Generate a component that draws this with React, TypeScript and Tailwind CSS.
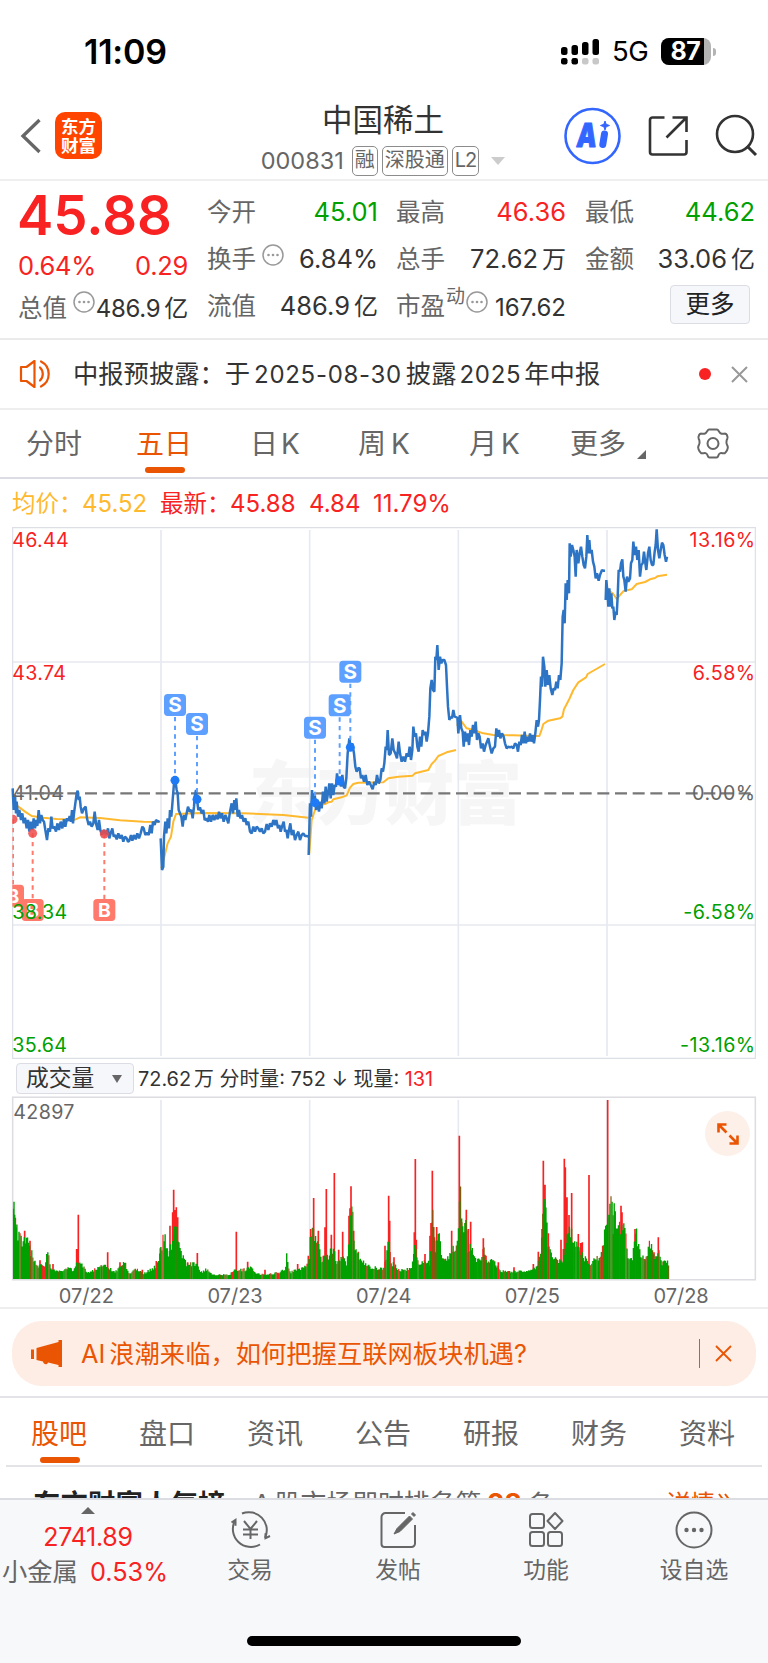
// src/pages/StockDetail.tsx

import clsx from "clsx";
import React from "react";

type Point = [number, number];

const FONT = "font-['Inter','Noto_Sans_CJK_SC',sans-serif]";

// 株価（1日ごとに [x, y] の折れ線）
const PRICE_DAYS: { offset: number; points: Point[] }[] = [
    {
        offset: 0,
        points: [
            [38, 805], [41, 870], [45, 825], [48, 880], [50, 845], [54, 890], [58, 870], [63, 900], [67, 880], [71, 910], [75, 893], [80, 925],
            [84, 900], [88, 935], [92, 905], [97, 930], [101, 895], [105, 925], [109, 900], [112, 918], [116, 870], [120, 910], [124, 885], [128, 900],
            [132, 905], [136, 930], [141, 960], [145, 925], [150, 935], [154, 890], [158, 925], [163, 920], [168, 935], [172, 910], [177, 930], [182, 905],
            [187, 925], [192, 898], [196, 920], [201, 895], [205, 903], [209, 888], [213, 905], [216, 870], [219, 910], [222, 880], [226, 850], [230, 820],
            [233, 812], [236, 840], [239, 830], [242, 860], [246, 880], [252, 865], [257, 860], [261, 895], [266, 915], [270, 905], [275, 920], [280, 910],
            [284, 875], [288, 910], [293, 930], [297, 900], [301, 930], [306, 945], [312, 930], [318, 945], [324, 925], [328, 955], [332, 940], [337, 925],
            [341, 950], [346, 945], [350, 958], [355, 940], [360, 955], [365, 945], [370, 965], [375, 950], [380, 955], [384, 965], [388, 962], [393, 945],
            [397, 962], [402, 945], [407, 958], [412, 940], [417, 955], [422, 940], [427, 920], [431, 925], [436, 945], [441, 938], [446, 945], [451, 915],
            [455, 940], [459, 905], [464, 915], [468, 900], [475, 905], [479, 903],
        ],
    },
    {
        offset: 0,
        points: [
            [482, 955], [486, 1050], [490, 1040], [492, 950], [496, 905], [499, 940], [503, 895], [507, 925], [510, 870], [514, 890], [518, 840], [522, 790],
            [526, 781], [530, 810], [533, 820], [536, 870], [540, 880], [544, 890], [548, 920], [552, 885], [556, 900], [560, 880], [564, 860], [569, 875],
            [574, 870], [578, 895], [582, 860], [584, 830], [588, 810], [591, 838], [595, 870], [600, 862], [605, 880], [610, 870], [614, 900], [619, 895],
            [624, 905], [628, 885], [633, 905], [638, 885], [643, 900], [648, 885], [653, 898], [657, 875], [661, 895], [666, 880], [671, 905], [676, 885],
            [680, 895], [685, 910], [690, 875], [695, 850], [699, 880], [703, 840], [706, 870], [709, 835], [713, 890], [717, 870], [721, 895], [726, 885],
            [731, 905], [736, 895], [740, 915], [745, 905], [750, 935], [755, 940], [760, 920], [765, 935], [770, 920], [775, 925], [780, 935], [785, 925],
            [790, 940], [795, 935], [800, 912], [805, 930], [810, 910], [815, 920], [820, 900], [825, 915], [829, 900], [834, 925], [838, 915], [842, 935],
            [846, 920], [851, 905], [855, 935], [859, 930], [863, 955], [867, 930], [871, 910], [875, 945], [880, 930], [885, 960], [890, 945], [895, 935],
            [900, 960], [905, 945], [910, 940], [915, 948], [920, 948], [925, 950],
        ],
    },
    {
        offset: 900,
        points: [
            [26, 1005], [30, 850], [33, 890], [36, 810], [40, 855], [44, 820], [48, 870], [52, 840], [57, 875], [61, 845], [65, 865], [69, 815],
            [73, 850], [77, 800], [80, 845], [84, 820], [88, 790], [92, 835], [96, 790], [100, 825], [104, 795], [108, 800], [111, 760], [115, 790],
            [119, 770], [123, 800], [127, 765], [131, 800], [135, 805], [139, 775], [143, 700], [148, 655], [152, 680], [157, 670], [162, 700], [166, 740],
            [170, 755], [174, 745], [179, 745], [183, 775], [187, 765], [192, 785], [197, 765], [202, 795], [207, 785], [212, 795], [218, 808], [223, 785],
            [227, 795], [231, 765], [236, 790], [241, 780], [245, 745], [249, 755], [253, 730], [257, 680], [260, 690], [263, 630], [267, 705], [272, 700],
            [277, 655], [281, 690], [286, 700], [291, 715], [296, 665], [300, 700], [305, 725], [310, 710], [315, 725], [320, 700], [325, 710], [329, 680],
            [333, 720], [337, 690], [340, 620], [344, 650], [348, 640], [352, 680], [356, 695], [360, 650], [364, 680], [368, 630], [372, 645], [376, 635],
            [380, 665], [384, 640], [388, 590], [391, 505], [395, 480], [399, 510], [403, 515], [406, 410], [409, 420], [412, 375], [416, 450], [420, 410],
            [424, 430], [428, 420], [433, 420], [438, 435], [441, 500], [444, 560], [448, 600], [452, 590], [456, 595], [460, 570], [464, 590], [470, 592],
        ],
    },
    {
        offset: 900,
        points: [
            [472, 590], [475, 640], [480, 585], [484, 625], [488, 635], [491, 680], [495, 635], [499, 665], [503, 640], [507, 675], [511, 630], [515, 650],
            [519, 615], [523, 640], [527, 605], [531, 660], [535, 640], [539, 650], [543, 685], [548, 670], [552, 695], [557, 675], [561, 665], [565, 655],
            [570, 680], [575, 700], [580, 685], [585, 680], [589, 625], [593, 650], [597, 630], [601, 655], [606, 640], [611, 650], [615, 670], [620, 685],
            [625, 680], [630, 682], [635, 680], [640, 685], [645, 670], [650, 675], [654, 695], [658, 665], [662, 675], [666, 645], [670, 670], [674, 635],
            [678, 670], [682, 650], [686, 665], [690, 640], [694, 665], [698, 645], [702, 670], [706, 640], [710, 600], [714, 620], [717, 600], [720, 540],
            [723, 470], [726, 500], [729, 410], [733, 440], [736, 500], [740, 450], [744, 495], [748, 465], [752, 505], [757, 525], [761, 505], [765, 510],
            [769, 485], [773, 505], [777, 465], [781, 480], [785, 430], [788, 290], [791, 270], [794, 310], [797, 190], [800, 240], [803, 180], [807, 220],
            [809, 70], [812, 110], [816, 75], [820, 90], [824, 110], [827, 170], [830, 90], [835, 130], [839, 100], [843, 80], [847, 110], [851, 135],
            [855, 145], [859, 110], [862, 45], [865, 100], [868, 60], [871, 100], [875, 90], [879, 125], [883, 140], [887, 175], [891, 160], [896, 182],
            [900, 165], [906, 150], [910, 152], [915, 152],
        ],
    },
    {
        offset: 1560,
        points: [
            [257, 240], [259, 180], [263, 225], [265, 260], [268, 205], [271, 260], [274, 220], [277, 265], [280, 260], [283, 300], [287, 275], [290, 285],
            [293, 230], [296, 150], [300, 155], [303, 130], [307, 118], [310, 170], [313, 180], [317, 215], [321, 170], [325, 185], [330, 175], [333, 130],
            [337, 120], [340, 65], [344, 105], [348, 80], [352, 120], [356, 90], [360, 170], [364, 135], [368, 130], [372, 95], [376, 130], [379, 150],
            [384, 100], [388, 80], [392, 120], [396, 135], [400, 135], [404, 95], [407, 75], [410, 28], [414, 90], [418, 115], [422, 90], [426, 68],
            [430, 75], [434, 105], [438, 125], [441, 110],
        ],
    },
];

// 平均価格
const AVG_DAYS: { offset: number; points: Point[] }[] = [
    { offset: 0, points: [[40, 850], [55, 860], [75, 875], [95, 888], [130, 893], [170, 897], [225, 899], [240, 892], [300, 894], [360, 901], [430, 905], [479, 906]] },
    { offset: 0, points: [[484, 1045], [492, 1015], [503, 970], [513, 950], [520, 905], [528, 882], [600, 879], [730, 880], [850, 885], [925, 893]] },
    { offset: 900, points: [[28, 1000], [35, 900], [45, 870], [57, 855], [75, 852], [85, 847], [95, 845], [100, 838], [125, 832], [140, 826], [150, 803], [160, 792], [175, 788], [250, 787], [265, 775], [295, 770], [338, 767], [345, 760], [385, 750], [395, 732], [405, 722], [415, 708], [440, 697], [468, 690]] },
    { offset: 900, points: [[472, 618], [476, 595], [485, 605], [500, 625], [520, 630], [550, 640], [580, 645], [640, 646], [700, 648], [718, 648], [723, 635], [730, 612], [745, 602], [780, 595], [787, 590], [792, 568], [808, 537], [820, 510], [835, 487], [858, 472], [863, 462], [915, 432]] },
    { offset: 1560, points: [[260, 205], [268, 212], [280, 222], [290, 237], [300, 225], [312, 212], [335, 208], [350, 192], [375, 186], [390, 178], [405, 174], [412, 169], [441, 164]] },
];

// 出来高の輪郭（緑）とスパイク（赤）
const VOLUME_ENVELOPE: Point[] = [
    [40, 240], [44, 200], [55, 150], [65, 135], [75, 130], [85, 145], [92, 95], [100, 78], [110, 48], [120, 44], [135, 50], [145, 100], [152, 42], [170, 24],
    [190, 27], [210, 40], [220, 27], [230, 65], [245, 52], [260, 22], [290, 34], [315, 50], [330, 36], [345, 22], [375, 64], [385, 17], [410, 34], [430, 17],
    [460, 37], [475, 52], [485, 115], [492, 148], [505, 92], [515, 115], [522, 158], [530, 182], [536, 135], [545, 80], [560, 52], [590, 50], [600, 22],
    [620, 34], [640, 14], [690, 16], [705, 32], [740, 32], [750, 44], [765, 20], [800, 14], [840, 24], [856, 32], [860, 84], [868, 22], [900, 34], [925, 50],
    [935, 185], [945, 140], [955, 135], [965, 68], [980, 70], [1000, 110], [1010, 60], [1030, 84], [1040, 38], [1050, 160], [1056, 280], [1062, 120],
    [1075, 80], [1090, 58], [1110, 42], [1150, 34], [1158, 74], [1166, 126], [1175, 55], [1200, 30], [1235, 34], [1246, 126], [1255, 54], [1275, 64],
    [1290, 52], [1298, 268], [1305, 110], [1318, 168], [1325, 66], [1345, 68], [1360, 110], [1372, 115], [1380, 328], [1387, 195], [1397, 192], [1405, 100],
    [1415, 115], [1430, 66], [1443, 64], [1450, 128], [1460, 58], [1480, 66], [1500, 27], [1540, 26], [1590, 26], [1610, 42], [1622, 84], [1630, 265],
    [1638, 245], [1645, 106], [1660, 66], [1690, 58], [1703, 180], [1720, 140], [1735, 110], [1750, 74], [1770, 54], [1790, 68], [1805, 84], [1815, 158],
    [1822, 240], [1835, 256], [1843, 252], [1850, 190], [1860, 170], [1873, 180], [1885, 66], [1898, 64], [1906, 174], [1918, 95], [1935, 64], [1950, 128],
    [1965, 76], [1975, 100], [1985, 52], [2000, 60], [2004, 74], [2008, 8],
];

const VOLUME_SPIKES: Point[] = [
    [46, 184], [74, 145], [90, 115], [120, 56], [159, 45], [230, 90], [235, 193], [323, 80], [360, 50], [427, 28], [469, 54], [481, 92], [510, 160], [518, 200], [521, 268],
    [525, 207], [529, 215], [533, 185], [563, 50], [592, 78], [709, 142], [743, 52], [795, 28], [893, 45], [925, 70], [932, 150], [941, 243], [955, 145], [970, 70],
    [975, 155], [979, 270], [994, 133], [1003, 318], [1016, 88], [1028, 142], [1047, 190], [1050, 212], [1053, 278], [1061, 145], [1075, 82], [1155, 100],
    [1166, 250], [1169, 175], [1182, 65], [1243, 140], [1246, 360], [1249, 118], [1275, 75], [1290, 130], [1293, 168], [1297, 325], [1303, 125], [1310, 156],
    [1332, 60], [1355, 145], [1378, 430], [1385, 170], [1399, 208], [1405, 150], [1412, 172], [1450, 122], [1458, 70], [1495, 50], [1542, 35], [1600, 45], [1615, 82], [1626, 150],
    [1630, 355], [1635, 283], [1645, 137], [1683, 118], [1690, 90], [1693, 361], [1696, 335], [1701, 245], [1707, 192], [1715, 258], [1735, 135], [1742, 108], [1747, 110],
    [1767, 312], [1808, 70], [1823, 537], [1840, 135], [1863, 220], [1866, 200], [1905, 150], [1935, 60], [1962, 80], [1975, 125], [1990, 52],
];

const VOLUME_BASE = 717;

const heightAt = (x: number) => {
    for (let i = 1; i < VOLUME_ENVELOPE.length; i++) {
        const [x1, h1] = VOLUME_ENVELOPE[i];
        const [x0, h0] = VOLUME_ENVELOPE[i - 1];
        if (x <= x1) return h0 + ((h1 - h0) * (x - x0)) / (x1 - x0);
    }
    return 0;
};

const buildVolume = () => {
    let seed = 11;
    const rand = () => {
        seed = (seed * 1103515245 + 12345) % 2147483648;
        return seed / 2147483648;
    };
    let green = "M42 717v-232";
    let mixed = "";
    let red = "";
    for (let x = 41; x < 2008; x += 3.2) {
        const h = heightAt(x) * (0.72 + rand() * 0.3);
        const bar = `M${x.toFixed(1)} ${VOLUME_BASE}v${-h.toFixed(1)}`;
        const r = rand();
        if (r < 0.12) red += bar;
        else if (r < 0.24) mixed += bar;
        else green += bar;
    }
    return { green, mixed, red };
};

const volume = buildVolume();
const toPoints = (points: Point[], offset: number) => points.map(([x, y]) => `${x + offset},${y}`).join(" ");

const SELL_MARKS = [
    { x: 525, box: 555, dot: 781 },
    { x: 591, box: 612, dot: 838 },
    { x: 945, box: 623, dot: 848 },
    { x: 1019, box: 556, dot: 783 },
    { x: 1051, box: 455, dot: 682 },
];

const BUY_MARKS = [
    { x: 39, box: 1127, dot: 898 },
    { x: 98, box: 1170, dot: 940 },
    { x: 313, box: 1170, dot: 942 },
];

const GRID_X = [483, 929, 1375, 1821];

/** ステータスバー */
const StatusBar: React.FC = () => (
    <div className="flex h-[90px] items-center justify-between pl-[84px] pr-[52px] pt-[13px]">
        <span className="text-[34px] font-semibold leading-none tracking-[-0.2px] text-black">11:09</span>
        <div className="flex items-center">
            <svg width="39" height="27" viewBox="0 0 39 27">
                <rect x="0" y="9" width="6.5" height="8" rx="2.5" />
                <rect x="10.5" y="7" width="6.5" height="10" rx="2.5" />
                <rect x="21" y="4" width="6.5" height="13" rx="2.5" />
                <rect x="31.5" y="1" width="6.5" height="16" rx="2.5" />
                <rect x="0" y="20" width="6.5" height="6.5" rx="2.2" />
                <rect x="10.5" y="20" width="6.5" height="6.5" rx="2.2" />
                <rect x="21" y="20" width="6.5" height="6.5" rx="2.2" fill="#c8c8c8" />
                <rect x="31.5" y="20" width="6.5" height="6.5" rx="2.2" fill="#c8c8c8" />
            </svg>
            <span className="ml-[12px] w-[37px] text-[27.500px] leading-none tracking-[-0.5px] text-black">5G</span>
            <div className="ml-[12px] flex h-[27px] w-[50px] items-center overflow-hidden rounded-[8px] bg-[#b3b3b3]">
                <div className="flex h-full w-[43px] items-center justify-center bg-black pl-[6px] text-[25px] font-bold leading-[27px] tracking-[-0.5px] text-white">
                    87
                </div>
            </div>
            <div className="ml-[2px] h-[8px] w-[3px] rounded-r-full bg-[#b3b3b3]" />
        </div>
    </div>
);

/** 銘柄ヘッダー */
const Header: React.FC = () => (
    <header className="flex h-[91px] border-b-2 border-[#efefef]">
        <div className="flex w-[230px] items-start pl-[20px] pt-[22px]">
            <svg className="mt-[6px]" width="22" height="36" viewBox="0 0 22 36" fill="none" stroke="#666" strokeWidth="3.300">
                <path d="M19.5 2 3 18l16.500 16" />
            </svg>
            <div className="ml-[13px] flex h-[47px] w-[47px] flex-col items-center justify-center rounded-[10px] bg-[#ff4400] text-[17.500px] font-bold leading-[19px] text-white">
                <span>东方</span>
                <span>财富</span>
            </div>
        </div>
        <div className="flex w-[306px] flex-col items-center pt-[9px]">
            <h1 className="text-[30.500px] leading-[42px] text-[#333]">中国稀土</h1>
            <div className="mt-[4px] flex items-center text-[#666]">
                <span className="text-[23.500px] leading-[32px]">000831</span>
                <span className="ml-[8px] h-[30px] rounded-[5px] border-[1.500px] border-[#8c8c8c] px-[2px] text-[20px] leading-[27px]">融</span>
                <span className="ml-1 h-[30px] rounded-[5px] border-[1.500px] border-[#8c8c8c] px-[2px] text-[20px] leading-[27px]">深股通</span>
                <span className="ml-[4px] h-[30px] rounded-[5px] border-[1.500px] border-[#8c8c8c] px-[2px] text-[20px] leading-[27px] tracking-[-1px]">L2</span>
                <span className="ml-[12px] border-x-[7px] border-t-[8px] border-x-transparent border-t-[#ccc]" />
            </div>
        </div>
        <div className="flex flex-1 items-start pl-[28px] pt-[17px]">
            <svg width="58" height="58" viewBox="0 0 58 58" fill="none">
                <circle cx="28.5" cy="29" r="27" stroke="#3366ff" strokeWidth="2.600" />
                <text
                    x="11"
                    y="40"
                    fontSize="33"
                    fontWeight="900"
                    textLength="20"
                    lengthAdjust="spacingAndGlyphs"
                    fill="#3366ff"
                    stroke="#3366ff"
                    strokeWidth="1"
                    strokeLinejoin="round"
                    transform="translate(5 0) skewX(-6)"
                >
                    A
                </text>
                <path d="M40.500 27 38.800 37.500" stroke="#3366ff" strokeWidth="7" strokeLinecap="round" />
                <path d="m41 14 1.200 3.300 3.300 1.200-3.300 1.200-1.200 3.300-1.200-3.300-3.300-1.200 3.300-1.200z" fill="#3366ff" stroke="#3366ff" />
            </svg>
            <svg className="ml-[26px] mt-[8px]" width="40" height="42" viewBox="0 0 40 42" fill="none" stroke="#333" strokeWidth="2.600">
                <path d="M16.500 2.500H4.500a2.500 2.500 0 0 0-2.500 2.500v32a2.500 2.500 0 0 0 2.500 2.500H36a2.500 2.500 0 0 0 2.500-2.500V25" />
                <path d="M24.500 2.500h14v14.500M38 3 18.500 22.500" />
            </svg>
            <svg className="ml-[27px] mt-[7px]" width="43" height="43" viewBox="0 0 43 43" fill="none" stroke="#333" strokeWidth="2.600">
                <circle cx="20" cy="20" r="18" />
                <path d="m32 32 9 9" strokeWidth="3" />
            </svg>
        </div>
    </header>
);

const MoreDots: React.FC<{ className?: string }> = ({ className }) => (
    <svg className={className} width="22" height="22" viewBox="0 0 22 22" fill="none" stroke="#999" strokeWidth="1.500">
        <circle cx="11" cy="11" r="10" />
        <g fill="#999" stroke="none">
            <circle cx="6.500" cy="11" r="1.300" />
            <circle cx="11" cy="11" r="1.300" />
            <circle cx="15.500" cy="11" r="1.300" />
        </g>
    </svg>
);

const Cell: React.FC<{ label: React.ReactNode; value: string; unit?: string; className?: string }> = ({
    label,
    value,
    unit,
    className = "text-[#333] text-[25.500px]",
}) => (
    <div className="flex h-[47px] items-center justify-between">
        <span className="flex items-center text-[24.500px] text-[#666]">{label}</span>
        <span className={clsx("whitespace-nowrap", className)}>
            {value}
            {unit && <span className="ml-[4px] text-[24px]">{unit}</span>}
        </span>
    </div>
);

/** 株価サマリー */
const QuotePanel: React.FC = () => (
    <section className="flex h-[159px] border-b-2 border-[#ebebeb] pl-[18px] pr-[12px] pt-2">
        <div className="-mt-1 w-[170px]">
            <div className="-ml-px h-[60px] whitespace-nowrap text-[54.500px] font-semibold leading-[60px] text-[#f82222]">45.88</div>
            <div className="flex h-[43px] items-center justify-between text-[25.500px] tracking-[-0.3px] text-[#f82222]">
                <span>0.64%</span>
                <span>0.29</span>
            </div>
            <div className="flex h-[41px] items-center justify-between text-[24.500px] text-[#666]">
                <span className="flex whitespace-nowrap">
                    总值
                    <MoreDots className="ml-[6px] mt-px" />
                </span>
                <span className="whitespace-nowrap text-[24px] tracking-[-0.3px] text-[#333]">
                    486.9<span className="ml-[4px]">亿</span>
                </span>
            </div>
        </div>
        <div className="ml-[19px] w-[171px]">
            <Cell label="今开" value="45.01" className="text-[#00a000] text-[25.500px]" />
            <Cell label={<>换手<MoreDots className="-mt-[9px] ml-[6px]" /></>} value="6.84%" />
            <Cell label="流值" value="486.9" unit="亿" />
        </div>
        <div className="ml-[18px] w-[170px]">
            <Cell label="最高" value="46.36" className="text-[#f82222] text-[25.500px]" />
            <Cell label="总手" value="72.62" unit="万" />
            <Cell
                label={<>市盈<span className="-mt-[18px] ml-[1px] text-[19px]">动</span><MoreDots className="-mt-[10px] ml-[1px]" /></>}
                value="167.62"
                className="text-[#333] text-[24px] pt-[2px]"
            />
        </div>
        <div className="ml-[19px] w-[170px]">
            <Cell label="最低" value="44.62" className="text-[#00a000] text-[25.500px]" />
            <Cell label="金额" value="33.06" unit="亿" />
            <div className="flex h-[47px] items-start justify-end pr-[5px] pt-[2px]">
                <button className="h-[39px] w-[80px] rounded-[4px] border border-[#dcdce4] bg-[#f6f7fb] text-[24.500px] leading-[37px] text-[#222]">更多</button>
            </div>
        </div>
    </section>
);

/** 開示予定のお知らせ */
const Announcement: React.FC = () => (
    <section className="flex h-[70px] items-center border-b-2 border-[#eee] pl-[19px] pr-[20px]">
        <svg width="34" height="28" viewBox="0 0 34 28" fill="none" stroke="#ea5504" strokeWidth="2.200" strokeLinejoin="round">
            <path d="M2 7h5.500L15.500 1v26L7.500 21H2z" />
            <path d="M21 7.500a9 9 0 0 1 0 13M22 1.500a14 14 0 0 1 0 25" strokeLinecap="round" />
        </svg>
        <span className="ml-[20px] whitespace-nowrap text-[25.300px] leading-[38px] text-[#333]">
            中报预披露：于<span className="mx-[4px] text-[24px] tracking-[0.7px]">2025-08-30</span>披露
            <span className="mx-[3px] text-[24px] tracking-[0.7px]">2025</span>年中报
        </span>
        <span className="ml-auto size-3 rounded-full bg-[#f82222]" />
        <svg className="ml-[20px]" width="17" height="17" viewBox="0 0 17 17" stroke="#999" strokeWidth="2">
            <path d="m1 1 15 15M16 1 1 16" />
        </svg>
    </section>
);

/** チャート期間タブ */
const PeriodTabs: React.FC = () => (
    <nav className="flex h-[69px] items-start border-b-2 border-[#dcdce4] pt-[14px] text-[28px] leading-[40px] text-[#666]">
        <span className="ml-[26px] w-[110px]">分时</span>
        <span className="relative w-[114px] text-[#ea5504]">
            五日
            <span className="absolute left-[9px] top-[43px] h-[6px] w-[40px] rounded-full bg-[#ea5504]" />
        </span>
        <span className="w-[108px]">日<span className="ml-[3px]">K</span></span>
        <span className="w-[111px]">周<span className="ml-[5px]">K</span></span>
        <span className="w-[101px]">月<span className="ml-[4px]">K</span></span>
        <span>更多</span>
        <svg className="ml-[11px] mt-[26px]" width="9" height="9" viewBox="0 0 9 9" fill="#666">
            <path d="M9 0v9H0z" />
        </svg>
        <svg className="ml-[50px] mt-[4px]" width="34" height="31" viewBox="0 0 34 31" fill="none" stroke="#666" strokeWidth="2">
            <path
                d="M13 1.500h8c1.800 0 1.500 3.500 4.500 4.200 3 .6 4-1.200 5.300 1 2 3.800.5 3.600-.2 5.800-.8 3 .2 4 1 5.500.8 1.800-.6 5.400-2.800 7.200-2 .6-3.300-.8-5.100.3-1.800 1-1 4-3.200 4h-7c-2.200 0-1.400-3-3.200-4-1.800-1.100-3.100.3-5.100-.3-2.200-1.800-3.600-5.400-2.800-7.200.8-1.500 1.800-2.500 1-5.500-.7-2.200-2.200-2-.2-5.800 1.300-2.200 2.300-.4 5.300-1 3-.7 2.700-4.200 4.500-4.200z"
                strokeLinejoin="round"
            />
            <circle cx="17" cy="15.500" r="5.500" />
        </svg>
    </nav>
);

const Legend: React.FC = () => (
    <div className="flex h-[48px] items-center whitespace-nowrap pl-[12px] pt-[2px] text-[24px] text-[#f82222]">
        <span className="w-[70px] text-[23.500px] text-[#ffb92e]">均价：</span>
        <span className="w-[78px] text-[#ffb92e]">45.52</span>
        <span className="w-[70px] text-[23.500px]">最新：</span>
        <span className="w-[79px]">45.88</span>
        <span className="w-[64px]">4.84</span>
        <span>11.79%</span>
    </div>
);

/** 5日チャート */
const PriceChart: React.FC = () => (
    <svg className="block h-[532px] w-full" viewBox="0 21 2304 1596" fill="none">
        <defs>
            <clipPath id="plot">
                <rect x="37" y="0" width="2230" height="1700" />
            </clipPath>
        </defs>
        <text x="1154" y="896" textAnchor="middle" fontSize="208" fontWeight="900" letterSpacing="-4" fill="#f6f6f6">
            东方财富
        </text>
        <g stroke="#e6e9f0" strokeWidth="5">
            {GRID_X.map((x) => (
                <path key={x} d={`M${x} 30V1608`} />
            ))}
            <path d="M38 426H2266M38 1215H2266" />
        </g>
        <path d="M38 23H2266V1615H38z" stroke="#dcdfe6" strokeWidth="3.500" />
        <path d="M92 820H2266" stroke="#777" strokeWidth="7" strokeDasharray="36 17" strokeDashoffset="-4" />
        {AVG_DAYS.map((day, i) => (
            <polyline key={i} points={toPoints(day.points, day.offset)} stroke="#ffb92e" strokeWidth="6" strokeLinejoin="round" />
        ))}
        {PRICE_DAYS.map((day, i) => (
            <polyline key={i} points={toPoints(day.points, day.offset)} stroke="#2d74c4" strokeWidth="7.500" strokeLinejoin="bevel" />
        ))}
        <g clipPath="url(#plot)">
            {SELL_MARKS.map((m) => (
                <g key={m.x}>
                    <path d={`M${m.x} ${m.box + 36}V${m.dot}`} stroke="#5ea0ff" strokeWidth="6" strokeDasharray="13 13" />
                    <circle cx={m.x} cy={m.dot} r="13.500" fill="#1f7af5" />
                    <rect x={m.x - 33} y={m.box - 33} width="66" height="66" rx="11" fill="#5ea0ff" />
                    <text x={m.x} y={m.box + 22} textAnchor="middle" fontSize="62" fontWeight="700" fill="#fff">
                        S
                    </text>
                </g>
            ))}
            {BUY_MARKS.map((m) => (
                <g key={m.x}>
                    <path d={`M${m.x} ${m.dot}V${m.box - 33}`} stroke="#ff7a6b" strokeWidth="6" strokeDasharray="13 13" />
                    <circle cx={m.x} cy={m.dot} r="13.500" fill="#f04a4a" fillOpacity="0.850" />
                    <rect x={m.x - 33} y={m.box - 33} width="66" height="66" rx="11" fill="#ff7a6b" />
                    <text x={m.x} y={m.box + 21} textAnchor="middle" fontSize="58" fontWeight="700" fill="#fff">
                        B
                    </text>
                </g>
            ))}
        </g>
        <g fontSize="59" letterSpacing="0.800" fill="#f82222">
            <text x="37" y="81">46.44</text>
            <text x="37" y="479">43.74</text>
            <text x="37" y="839" fill="#666">41.04</text>
            <text x="37" y="1197" fill="#00a000">38.34</text>
            <text x="37" y="1595" fill="#00a000">35.64</text>
        </g>
        <path d="M50 820H190" stroke="#777" strokeWidth="6" />
        <g fontSize="59" letterSpacing="1.500" fill="#f82222" textAnchor="end">
            <text x="2267" y="81">13.16%</text>
            <text x="2267" y="479">6.58%</text>
            <text x="2267" y="839" fill="#666">0.00%</text>
            <text x="2267" y="1197" fill="#00a000">-6.58%</text>
            <text x="2267" y="1595" fill="#00a000">-13.16%</text>
        </g>
    </svg>
);

/** 出来高 */
const VolumePanel: React.FC = () => (
    <section>
        <div className="flex h-[37px] items-start pl-[16px] pt-1 text-[20px] text-[#333]">
            <div className="flex h-[31px] w-[118px] items-center rounded-[4px] border border-[#dcdce4] bg-[#f6f7fb] pl-[9px] text-[22.800px]">
                成交量
                <span className="ml-[18px] border-x-[5px] border-t-[8px] border-x-transparent border-t-[#666]" />
            </div>
            <span className="ml-[4px] whitespace-nowrap text-[19.900px] leading-[32px]">
                72.62<span className="ml-[3px]">万</span> 分时量: 752 ↓ 现量: <span className="text-[#f82222]">131</span>
            </span>
        </div>
        <div className="relative">
            <svg className="block h-[185px] w-full" viewBox="0 168 2304 555" fill="none">
                <g stroke="#e6e9f0" strokeWidth="5">
                    {GRID_X.map((x) => (
                        <path key={x} d={`M${x} 180V717`} />
                    ))}
                </g>
                <path d="M38 172H2266V719H38z" stroke="#dcdce2" strokeWidth="4.500" />
                <path d={VOLUME_SPIKES.map(([x, h]) => `M${x} ${VOLUME_BASE}v${-h}`).join("")} stroke="#f82222" strokeWidth="5" />
                <path d={volume.red} stroke="#f82222" strokeWidth="3.600" />
                <path d={volume.mixed} stroke="#7a5c0c" strokeWidth="3.600" />
                <path d={volume.green} stroke="#00a000" strokeWidth="4.200" />
                <text x="40" y="237" fontSize="59" letterSpacing="1" fill="#666">
                    42897
                </text>
            </svg>
            <button className="absolute right-[18px] top-[15px] flex size-[45px] items-center justify-center rounded-full bg-[#fdf0e9]">
                <svg width="24" height="24" viewBox="0 0 24 24" fill="none" stroke="#ea5504" strokeWidth="2.600">
                    <path d="M10.500 2.500H2.500v8M2.500 2.500l8 8M21.500 13.500v8h-8M21.500 21.500l-8-8" />
                </svg>
            </button>
        </div>
        <div className="flex h-[28px] border-b-2 border-[#eee] pl-[12px] pt-px text-[20px] leading-[28px] text-[#666]">
            {["07/22", "07/23", "07/24", "07/25", "07/28"].map((date) => (
                <span key={date} className="h-[25px] w-[148.700px] text-center">{date}</span>
            ))}
        </div>
    </section>
);

const Banner: React.FC = () => (
    <section className="h-[89px] border-b-2 border-[#e4e4e8] px-[12px] pt-[12px]">
        <div className="flex h-[65px] items-center rounded-[30px] bg-[#fdede4] pl-[19px] pr-[24px] text-[#ea5504]">
            <svg width="32" height="27" viewBox="0 0 32 27" fill="currentColor">
                <path d="M0 9.500h3v9.500H0zM5.500 8 27.500 2V0H31v27h-3.500v-2L17 22.500c-.5 2.500-4.500 2.500-5-1L5.500 20z" />
            </svg>
            <span className="ml-[18px] whitespace-nowrap pt-px text-[25.300px]">
                AI<span className="ml-[4px]">浪潮来临，如何把握互联网板块机遇?</span>
            </span>
            <span className="ml-auto h-[29px] w-[1.500px] bg-[#ea5504]" />
            <svg className="ml-[15px]" width="17" height="17" viewBox="0 0 17 17" stroke="currentColor" strokeWidth="1.800">
                <path d="m1 1 15 15M16 1 1 16" />
            </svg>
        </div>
    </section>
);

const InfoTabs: React.FC = () => (
    <>
        <nav className="mx-[6px] flex h-[69px] border-b-2 border-[#e4e4e8] pl-[25px] pt-[16px] text-[28px] leading-[40px] text-[#666]">
            {["股吧", "盘口", "资讯", "公告", "研报", "财务", "资料"].map((tab, i) => (
                <span key={tab} className={clsx("relative w-[108px] shrink-0", i === 0 && "text-[#ea5504]")}>
                    {tab}
                    {i === 0 && <span className="absolute left-[9px] top-[43px] h-[6px] w-[40px] rounded-full bg-[#ea5504]" />}
                </span>
            ))}
        </nav>
        <div className="flex h-[31px] items-start overflow-hidden whitespace-nowrap pl-[33px] pr-[36px] pt-[18px] text-[26px] leading-[38px] text-[#666]">
            <span className="w-[220px] text-[27.500px] font-bold text-[#222]">东方财富人气榜</span>
            <span className="text-[25.800px]">
                A<span className="ml-[4px]">股市场即时排名第</span>
            </span>
            <span className="mx-[6px] text-[27px] font-bold text-[#ea5504]">28</span>
            <span className="text-[25px]">名</span>
            <span className="ml-auto flex text-[24.500px] text-[#ea5504]">
                详情
                <svg className="ml-[3px] mt-[8px]" width="14" height="18" viewBox="0 0 14 18" fill="none" stroke="currentColor" strokeWidth="2">
                    <path d="m1 1 6 8-6 8M7 1l6 8-6 8" />
                </svg>
            </span>
        </div>
    </>
);

const ACTIONS = [
    {
        label: "交易",
        icon: (
            <>
                <path d="M13 3.500A18 18 0 0 1 36 28M31 34.500A18 18 0 0 1 6 10.500" />
                <path d="M2.500 12.500 6.500 9.800v6M41 26l-4.500 2.200v-5" />
                <path d="m15 11 6.500 8 6.500-8M21.500 19v10M14 19.500h15M14 24.500h15" />
            </>
        ),
    },
    {
        label: "发帖",
        icon: (
            <>
                <path d="M28 3H8.500a4 4 0 0 0-4 4v27a3 3 0 0 0 3 3h27a3.500 3.500 0 0 0 3.500-3.500V15" />
                <path d="m17 24 3-5.500L32.500 6l3 3-12.500 12.500z" fill="#666" strokeWidth="1" />
                <path d="m34.500 4 1.500-1.500 2.500 2.500-1.500 1.500z" fill="#666" strokeWidth="1" />
            </>
        ),
    },
    {
        label: "功能",
        icon: (
            <>
                <rect x="5" y="4" width="14" height="14" rx="2.500" />
                <rect x="5" y="22" width="14" height="14" rx="2.500" />
                <rect x="23" y="22" width="14" height="14" rx="2.500" />
                <path d="m30 3 7.500 8L30 19l-7.500-8z" strokeLinejoin="round" />
            </>
        ),
    },
    {
        label: "设自选",
        icon: (
            <>
                <circle cx="21" cy="20" r="17.500" />
                <g fill="#666" stroke="none">
                    <circle cx="13.500" cy="20" r="2.200" />
                    <circle cx="21" cy="20" r="2.200" />
                    <circle cx="28.500" cy="20" r="2.200" />
                </g>
            </>
        ),
    },
];

/** 下部バー */
const BottomBar: React.FC = () => (
    <footer className="relative h-[165px] border-t-2 border-[#dcdde2] bg-[#f7f8fa]">
        <div className="flex">
            <div className="flex w-[176px] flex-col items-center pt-[7px]">
                <span className="border-x-[7px] border-b-[7px] border-x-transparent border-b-[#666]" />
                <span className="mt-[6px] text-[25px] leading-[34px] tracking-[-0.3px] text-[#f82222]">2741.89</span>
                <span className="flex w-full whitespace-nowrap pl-[2px] text-[25.300px] leading-[36px] text-[#666]">
                    小金属<span className="ml-[12px] text-[#f82222]">0.53%</span>
                </span>
            </div>
            {ACTIONS.map(({ label, icon }) => (
                <div key={label} className="flex w-[148px] flex-col items-center pt-[10px]">
                    <svg width="42" height="40" viewBox="0 0 42 40" fill="none" stroke="#666" strokeWidth="2">
                        {icon}
                    </svg>
                    <span className="mt-[3px] text-[22.800px] leading-[34px] text-[#666]">{label}</span>
                </div>
            ))}
        </div>
        <div className="absolute bottom-[17px] left-[247px] h-[10px] w-[274px] rounded-full bg-black" />
    </footer>
);

const App: React.FC = () => {
    return (
        <div lang="zh-CN" className={clsx("h-[1663px] w-[768px] overflow-hidden bg-white", FONT)}>
            <StatusBar />
            <Header />
            <QuotePanel />
            <Announcement />
            <PeriodTabs />
            <Legend />
            <PriceChart />
            <VolumePanel />
            <Banner />
            <InfoTabs />
            <BottomBar />
        </div>
    );
};

export default App;
